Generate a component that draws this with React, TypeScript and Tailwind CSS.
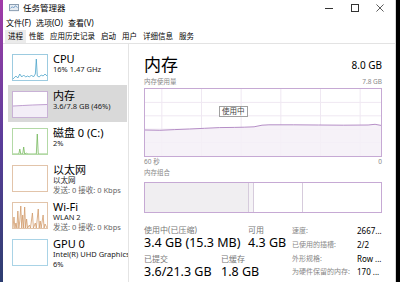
import React from 'react'

const font = '"Noto Sans", "Noto Sans CJK SC", sans-serif'

interface SideItem {
  title: string
  lines: string[]
  stroke: string
  border: string
  fill: string
  points?: string
  selected?: boolean
}

const items: SideItem[] = [
  {
    title: 'CPU',
    lines: ['16% 1.47 GHz'],
    stroke: '#4aa3c9',
    border: '#9ccbe0',
    fill: 'none',
    points: '0,24 3,21 5,23 7,19 9,22 11,20 13,22 15,21 17,22 19,20 21,22 23,19 24,4 25,21 27,22 29,20 31,21 33,19 35,21',
  },
  {
    title: '内存',
    lines: ['3.6/7.8 GB (46%)'],
    stroke: '#b088c4',
    border: '#c9b2d6',
    fill: '#f3eef7',
    points: '0,14 10,13.5 20,13 35,12.5',
    selected: true,
  },
  {
    title: '磁盘 0 (C:)',
    lines: ['2%'],
    stroke: '#74b85a',
    border: '#b3d9a6',
    fill: 'none',
    points: '0,25 6,25 7,20 8,25 10,25 11,18 12,25 14,24 15,25 24,25 25,5 26,25 35,25',
  },
  {
    title: '以太网',
    lines: ['以太网', '发送: 0 接收: 0 Kbps'],
    stroke: '#d3a27a',
    border: '#e2c4aa',
    fill: 'none',
  },
  {
    title: 'Wi-Fi',
    lines: ['WLAN 2', '发送: 0 接收: 0 Kbps'],
    stroke: '#d19a6a',
    border: '#e2c4aa',
    fill: 'none',
    points: '0,25 1,14 2,25 3,20 4,25 5,8 6,25 7,18 8,3 9,25 10,12 11,25 12,4 13,25 14,16 15,25 17,22 18,25 20,10 21,25 23,20 24,25 26,6 27,25 28,18 29,25 31,12 32,25 33,21 35,25',
  },
  {
    title: 'GPU 0',
    lines: ['Intel(R) UHD Graphics', '6%'],
    stroke: '#8cc4de',
    border: '#a9d3e6',
    fill: 'none',
  },
]

function Thumb({ item }: { item: SideItem }) {
  return (
    <div
      className="w-[36px] h-[27px] border bg-white shrink-0"
      style={{ borderColor: item.border }}
    >
      <svg width="34" height="25" viewBox="0 0 35 25" preserveAspectRatio="none">
        {item.points && item.fill !== 'none' && (
          <polygon points={`${item.points} 35,25 0,25`} fill={item.fill} />
        )}
        {item.points && (
          <polyline points={item.points} fill="none" stroke={item.stroke} strokeWidth="0.8" />
        )}
      </svg>
    </div>
  )
}

function Sidebar() {
  return (
    <div className="w-[126px] shrink-0 border-r border-[#e4e4e4] pt-[4px] pl-[5px] pr-[1px] flex flex-col overflow-hidden">
      {items.map((item) => (
        <div
          key={item.title}
          className={`h-[37px] shrink-0 flex items-start gap-[5px] pl-[4px] pt-[6px] ${
            item.selected ? 'bg-[#d9d9d9]' : ''
          }`}
        >
          <Thumb item={item} />
          <div className="flex flex-col -mt-[1px] min-w-0">
            <span className="text-[11px] text-black leading-[12px] whitespace-nowrap">{item.title}</span>
            {item.lines.map((l, i) => (
              <span
                key={i}
                className={`text-[7.5px] leading-[9.5px] whitespace-nowrap ${
                  l.startsWith('发送') ? 'text-[#666]' : 'text-[#222]'
                }`}
              >
                {l}
              </span>
            ))}
          </div>
        </div>
      ))}
    </div>
  )
}

function UsageGraph() {
  const line =
    '0,41 15,41.3 30,40.6 45,40 60,39.3 75,38.6 90,38.4 100,38.2 110,37.8 118,36.2 125,35.8 150,35.8 175,36 200,36.2 225,36 232,35.3 238,36.4'
  return (
    <div className="relative h-[69px] mt-[1px] border border-[#c6a9d4] bg-white shrink-0">
      <svg width="100%" height="100%" viewBox="0 0 238 67" preserveAspectRatio="none" className="absolute inset-0">
        {[17, 57, 97, 137, 177, 217].map((x) => (
          <line key={x} x1={x} y1="0" x2={x} y2="67" stroke="#efe8f2" strokeWidth="1" />
        ))}
        {[13.4, 26.8, 40.2, 53.6].map((y) => (
          <line key={y} x1="0" y1={y} x2="238" y2={y} stroke="#efe8f2" strokeWidth="1" />
        ))}
        <polygon points={`${line} 238,67 0,67`} fill="#f4f0f7" fillOpacity="0.85" />
        <polyline points={line} fill="none" stroke="#b48dc6" strokeWidth="1" />
      </svg>
      <div className="absolute left-[74px] top-[17px] border border-[#a0a0a0] bg-white px-[2px] text-[7.5px] leading-[9px] text-[#444]">
        使用中
      </div>
    </div>
  )
}

function CompositionBar() {
  return (
    <div className="h-[31px] mt-[4px] shrink-0 border border-[#c6a9d4] flex bg-white">
      <div className="w-[104px] bg-[#f0eef1] border-r border-[#d6cbdc]" />
      <div className="w-[5px] bg-[#f5f3f6] border-r border-[#d6cbdc]" />
      <div className="w-[49px] border-r border-[#d6cbdc]" />
      <div className="flex-1" />
    </div>
  )
}

function Stat({ label, value, className = '' }: { label: string; value: string; className?: string }) {
  return (
    <div className={`flex flex-col shrink-0 ${className}`}>
      <span className="text-[8px] leading-[11px] text-[#777] whitespace-nowrap">{label}</span>
      <span className="text-[12.5px] leading-[16px] text-black whitespace-nowrap">{value}</span>
    </div>
  )
}

function MainPanel() {
  const specs: [string, string][] = [
    ['速度:', '2667...'],
    ['已使用的插槽:', '2/2'],
    ['外形规格:', 'Row ...'],
    ['为硬件保留的内存:', '170 ...'],
  ]
  return (
    <div className="flex-1 min-w-0 overflow-hidden pl-[15px] pr-[13px] pt-[9px] flex flex-col">
      <div className="flex items-center justify-between h-[23px] shrink-0">
        <span className="text-[17px] leading-[23px] text-black">内存</span>
        <span className="text-[10px] leading-[14px] text-black">8.0 GB</span>
      </div>
      <div className="flex justify-between h-[11px] items-center text-[6.5px] text-[#888] shrink-0">
        <span>内存使用量</span>
        <span>7.8 GB</span>
      </div>
      <UsageGraph />
      <div className="flex justify-between h-[10px] items-center text-[6.5px] text-[#888] shrink-0">
        <span>60 秒</span>
        <span>0</span>
      </div>
      <div className="h-[11px] flex items-center text-[6.5px] text-[#888] shrink-0">内存组合</div>
      <CompositionBar />
      <div className="flex mt-[11px]">
        <div className="w-[148px] shrink-0 flex flex-col">
          <div className="flex">
            <Stat label="使用中(已压缩)" value="3.4 GB (15.3 MB)" className="w-[104px]" />
            <Stat label="可用" value="4.3 GB" />
          </div>
          <div className="flex mt-[2px]">
            <Stat label="已提交" value="3.6/21.3 GB" className="w-[77px]" />
            <Stat label="已缓存" value="1.8 GB" />
          </div>
        </div>
        <div className="grid grid-cols-[65px_auto] mt-[1px] text-[7px] leading-[11.5px]">
          {specs.map(([k, v]) => (
            <React.Fragment key={k}>
              <span className="text-[#888] whitespace-nowrap">{k}</span>
              <span className="text-black text-[8px] whitespace-nowrap">{v}</span>
            </React.Fragment>
          ))}
        </div>
      </div>
    </div>
  )
}

export default function App() {
  const tabs = ['进程', '性能', '应用历史记录', '启动', '用户', '详细信息', '服务']
  return (
    <div className="w-[400px] h-[282px] flex overflow-hidden" style={{ fontFamily: font }}>
      {/* desktop strip */}
      <div className="w-[3px] shrink-0 bg-gradient-to-b from-[#a23aa8] via-[#5a3c9a] to-[#2c3d70]" />

      <div className="flex-1 flex flex-col bg-white min-w-0">
        {/* Title bar */}
        <div className="h-[16px] shrink-0 flex items-center">
          <svg width="10" height="8" viewBox="0 0 11 9" className="ml-[6px]">
            <rect x="0.5" y="0.5" width="10" height="7" fill="#e6ecf2" stroke="#7d93a8" />
            <polyline points="1.5,5 3.5,3 5,4.5 7,2 9.5,4" fill="none" stroke="#4a7fb5" strokeWidth="0.8" />
          </svg>
          <span className="ml-[4px] text-[8.5px] leading-[12px] text-black">任务管理器</span>
          <div className="ml-auto flex items-center pr-[2px]">
            <div className="w-[24px] flex justify-center">
              <div className="w-[8px] h-[1px] bg-[#333]" />
            </div>
            <div className="w-[24px] flex justify-center ml-[2px]">
              <div className="w-[8px] h-[8px] border border-[#333]" />
            </div>
            <div className="w-[26px] flex justify-center">
              <svg width="8" height="8" viewBox="0 0 9 9">
                <path d="M0.5 0.5L8.5 8.5M8.5 0.5L0.5 8.5" stroke="#333" strokeWidth="0.9" />
              </svg>
            </div>
          </div>
        </div>

        {/* Menu */}
        <div className="h-[14px] shrink-0 flex items-center gap-[5px] pl-[3px] text-[8px] text-black">
          <span>文件(F)</span>
          <span>选项(O)</span>
          <span>查看(V)</span>
        </div>

        {/* Tabs */}
        <div className="h-[14px] shrink-0 flex items-stretch pl-[2px] border-b border-[#e3e3e3] text-[7.5px] text-black">
          {tabs.map((t, i) => (
            <span
              key={t}
              className={`px-[3px] flex items-center ${i === 0 ? 'bg-[#ebebeb]' : ''}`}
            >
              {t}
            </span>
          ))}
        </div>

        {/* Body */}
        <div className="flex-1 flex min-h-0">
          <Sidebar />
          <MainPanel />
        </div>
      </div>

      {/* right edge */}
      <div className="w-[1px] shrink-0 bg-[#d8d8d8]" />
      <div className="w-[4px] shrink-0 bg-black" />
    </div>
  )
}
